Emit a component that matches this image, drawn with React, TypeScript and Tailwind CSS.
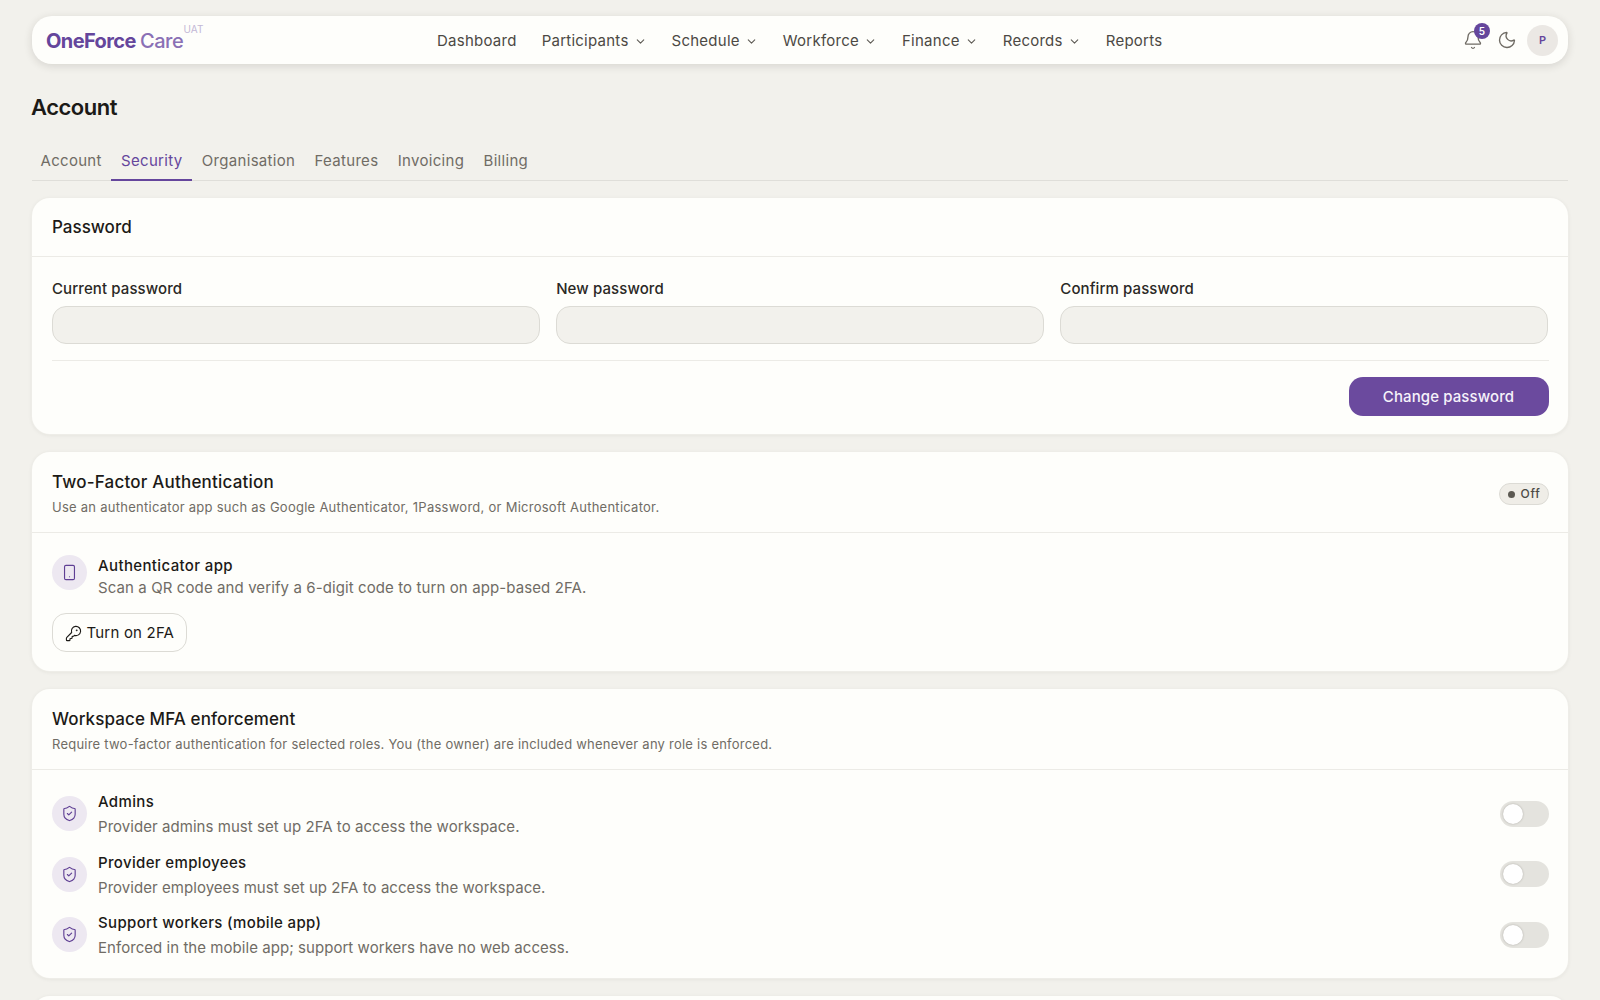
import { Bell, Moon, ChevronDown, Smartphone, KeyRound, ShieldCheck } from "lucide-react";

const navItems: [string, boolean][] = [
  ["Dashboard", false],
  ["Participants", true],
  ["Schedule", true],
  ["Workforce", true],
  ["Finance", true],
  ["Records", true],
  ["Reports", false],
];
const tabs = ["Account", "Security", "Organisation", "Features", "Invoicing", "Billing"];
const roles = [
  ["Admins", "Provider admins must set up 2FA to access the workspace."],
  ["Provider employees", "Provider employees must set up 2FA to access the workspace."],
  ["Support workers (mobile app)", "Enforced in the mobile app; support workers have no web access."],
];

function Card({ children, className = "" }: { children: React.ReactNode; className?: string }) {
  return (
    <section className={`rounded-[18px] bg-[#fefefb] shadow-[0_0_0_1px_#eeede8,0_1px_4px_rgba(40,35,25,0.08)] ${className}`}>
      {children}
    </section>
  );
}

function IconCircle({ children, className = "" }: { children: React.ReactNode; className?: string }) {
  return (
    <div className={`flex h-[35px] w-[35px] shrink-0 items-center justify-center rounded-full bg-[#ede8f1] text-[#5f3f94] ${className}`}>
      {children}
    </div>
  );
}

function Field({ label }: { label: string }) {
  return (
    <div className="flex flex-col gap-[6px]">
      <label className="text-[15px] leading-[22px] font-medium tracking-[0.1px] text-[#2a2825]">{label}</label>
      <div className="h-[38px] rounded-[14px] border border-[#dcdbd5] bg-[#f2f1ec]" />
    </div>
  );
}

export default function App() {
  return (
    <div
      className="h-[1000px] overflow-hidden bg-[#f2f1ec] px-8 pt-4 text-[#1c1a17]"
      style={{ fontFamily: "Inter, 'Liberation Sans', sans-serif" }}
    >
      <header className="relative flex h-[48px] items-center justify-between rounded-[20px] bg-[#fefefb] pr-[10px] pl-[14px] shadow-[0_2px_8px_rgba(40,35,25,0.14)]">
        <div className="flex items-start pt-[2px]">
          <span className="text-[20px] leading-[28px] font-bold tracking-[-0.6px] text-[#65469c]">
            OneForce <span className="font-medium tracking-[-0.4px] text-[#8a70b5]">Care</span>
          </span>
          <span className="-mt-[5px] text-[10px] leading-[14px] tracking-[0.2px] text-[#c3b8d6]">UAT</span>
        </div>
        <nav className="absolute top-0 left-[405px] flex h-[48px] items-center gap-[25px] pt-[2px] text-[15px] tracking-[0.25px] text-[#4c4944]">
          {navItems.map(([name, hasMenu]) => (
            <span key={name} className="flex items-center gap-[5px]">
              {name}
              {hasMenu && <ChevronDown size={13} strokeWidth={2} className="text-[#5e5b55]" />}
            </span>
          ))}
        </nav>
        <div className="flex items-center gap-[9px]">
          <div className="relative mr-[3px] flex h-[24px] w-[24px] items-center justify-center text-[#6f6b64]">
            <Bell size={20} strokeWidth={1.6} />
            <span className="absolute -top-[5px] left-[13px] flex h-[16px] w-[16px] items-center justify-center rounded-full bg-[#65469c] text-[10px] font-semibold text-white">
              5
            </span>
          </div>
          <Moon size={20} strokeWidth={1.6} className="text-[#6f6b64]" />
          <div className="ml-[1px] flex h-[31px] w-[31px] items-center justify-center rounded-full bg-[#ebe8e4] text-[11px] font-semibold text-[#65469c]">
            P
          </div>
        </div>
      </header>

      <h1 className="mt-[29px] -ml-px text-[22px] leading-[28px] font-semibold tracking-[-0.5px] text-[#1c1a17]">Account</h1>

      <div className="mt-[20px] flex h-[40px] border-b border-[#dfded9]">
        {tabs.map((t, i) => (
          <div
            key={t}
            className={`-mb-px flex h-[40px] items-center border-b-2 px-[9.7px] pt-[2px] text-[15px] tracking-[0.3px] first:pl-[8.5px] ${
              i === 1 ? "border-[#65469c] text-[#65469c]" : "border-transparent text-[#706c65]"
            }`}
          >
            {t}
          </div>
        ))}
      </div>

      <div className="mt-[17px] flex flex-col gap-[18px]">
        <Card>
          <div className="flex h-[59px] items-center border-b border-[#ecebe6] pt-[2px] pr-[19.5px] pl-[20px] text-[17px] font-medium text-[#1c1a17]">
            Password
          </div>
          <div className="pt-[21px] pr-[19.5px] pb-[18px] pl-[20px]">
            <div className="grid grid-cols-3 gap-[16px]">
              <Field label="Current password" />
              <Field label="New password" />
              <Field label="Confirm password" />
            </div>
            <div className="mt-[16px] flex justify-end border-t border-[#ecebe6] pt-[16px]">
              <button className="h-[39px] w-[200px] rounded-[14px] bg-[#6b4a9e] pt-[1px] text-[15px] font-medium tracking-[0.1px] text-[#f6f2fa]">
                Change password
              </button>
            </div>
          </div>
        </Card>

        <Card>
          <div className="flex h-[81px] items-center justify-between border-b border-[#ecebe6] pt-[3px] pr-[19.5px] pl-[20px]">
            <div>
              <h2 className="text-[17px] leading-[24px] font-medium tracking-[0.2px] text-[#1c1a17]">Two-Factor Authentication</h2>
              <p className="mt-[3px] text-[13px] leading-[20px] tracking-[0.26px] text-[#706c65]">
                Use an authenticator app such as Google Authenticator, 1Password, or Microsoft Authenticator.
              </p>
            </div>
            <div className="flex h-[22px] w-[50px] items-center justify-center gap-[6px] rounded-full border border-[#dcdbd5] bg-[#efede7] pt-[1px] pl-[1px] text-[12px] font-medium tracking-[0.7px] text-[#4c4944]">
              <span className="h-[7px] w-[7px] rounded-full bg-[#5c5952]" />
              Off
            </div>
          </div>
          <div className="pt-[22px] pr-[19.5px] pb-[19px] pl-[20px]">
            <div className="flex items-start gap-[11px]">
              <IconCircle>
                <Smartphone size={17} strokeWidth={1.6} />
              </IconCircle>
              <div>
                <div className="text-[15px] leading-[22px] font-medium tracking-[0.37px] text-[#1c1a17]">Authenticator app</div>
                <div className="text-[15px] leading-[22px] tracking-[0.1px] text-[#706c65]">
                  Scan a QR code and verify a 6-digit code to turn on app-based 2FA.
                </div>
              </div>
            </div>
            <button className="mt-[14px] flex h-[39px] items-center gap-[5px] rounded-[14px] border border-[#dcdbd5] bg-[#fefefb] px-[11.5px] pt-[1px] text-[15px] tracking-[0.2px] text-[#1c1a17]">
              <KeyRound size={17} strokeWidth={1.6} />
              Turn on 2FA
            </button>
          </div>
        </Card>

        <Card>
          <div className="flex h-[81px] flex-col justify-center border-b border-[#ecebe6] pt-[3px] pr-[19.5px] pl-[20px]">
            <h2 className="text-[17px] leading-[24px] font-medium tracking-[0.1px] text-[#1c1a17]">Workspace MFA enforcement</h2>
            <p className="mt-[3px] text-[13px] leading-[20px] tracking-[0.23px] text-[#706c65]">
              Require two-factor authentication for selected roles. You (the owner) are included whenever any role is enforced.
            </p>
          </div>
          <div className="flex flex-col gap-[13.7px] pt-[21px] pr-[19.5px] pb-[19px] pl-[20px]">
            {roles.map(([title, desc]) => (
              <div key={title} className="flex items-center gap-[11px]">
                <IconCircle className="mb-[2px]">
                  <ShieldCheck size={17} strokeWidth={1.6} />
                </IconCircle>
                <div className="flex-1">
                  <div className="text-[15px] leading-[22px] font-medium tracking-[0.35px] text-[#1c1a17]">{title}</div>
                  <div className="mt-[3px] text-[15px] leading-[22px] tracking-[0.05px] text-[#706c65]">{desc}</div>
                </div>
                <div className="mb-[2px] flex h-[26px] w-[49px] items-center rounded-full bg-[#e4e3de] pl-[3px]">
                  <div className="h-[20px] w-[20px] rounded-full bg-white shadow-[0_0_2px_rgba(60,55,45,0.35)]" />
                </div>
              </div>
            ))}
          </div>
        </Card>

        <Card className="h-[120px]">
          <div />
        </Card>
      </div>
    </div>
  );
}
